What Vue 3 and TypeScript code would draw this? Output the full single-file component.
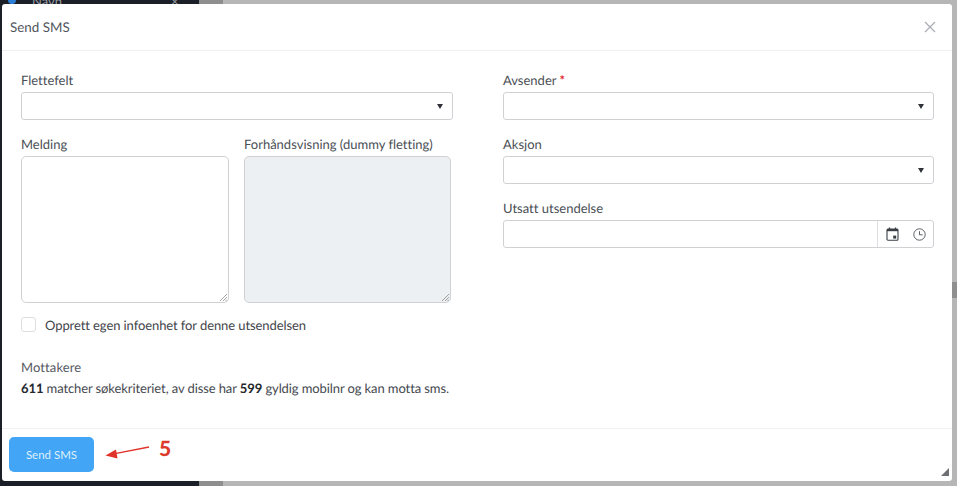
<script setup lang="ts">
const title: string = 'Send SMS'
</script>

<template>
  <div class="page">
    <div class="bg-dark"></div>
    <div class="bg-mid"></div>
    <div class="bg-thumb"></div>
    <div class="peek">
      <span class="dot"></span><span class="peek-name">Navn</span><span class="peek-x">×</span>
    </div>

    <section class="dialog">
      <header class="head">
        <h1 class="title">{{ title }}</h1>
        <svg class="close" width="12" height="12" viewBox="0 0 12 12">
          <path d="M1 1 L11 11 M11 1 L1 11" stroke="#a9adb3" stroke-width="1.2" fill="none" />
        </svg>
      </header>

      <div class="body">
        <div class="cols">
          <div class="col">
            <label class="lab">Flettefelt</label>
            <div class="select"><span class="caret"></span></div>
            <div class="pair">
              <div class="area-wrap">
                <label class="lab">Melding</label>
                <div class="area"><svg class="grip" width="8" height="8" viewBox="0 0 8 8"><path d="M1 8 L8 1 M4 8 L8 4 M6.5 8 L8 6.5" stroke="#8d8d8d" stroke-width="0.8" /></svg></div>
              </div>
              <div class="area-wrap">
                <label class="lab">Forhåndsvisning (dummy fletting)</label>
                <div class="area disabled"><svg class="grip" width="8" height="8" viewBox="0 0 8 8"><path d="M1 8 L8 1 M4 8 L8 4 M6.5 8 L8 6.5" stroke="#8d8d8d" stroke-width="0.8" /></svg></div>
              </div>
            </div>
          </div>
          <div class="col">
            <label class="lab">Avsender <span class="req">*</span></label>
            <div class="select"><span class="caret"></span></div>
            <label class="lab gap-lab">Aksjon</label>
            <div class="select"><span class="caret"></span></div>
            <label class="lab gap-lab">Utsatt utsendelse</label>
            <div class="dt">
              <div class="dt-input"></div>
              <div class="dt-icons">
                <svg width="13" height="14" viewBox="0 0 13 14">
                  <path d="M3.5 0.5 V3 M9.5 0.5 V3" stroke="#3a3f45" stroke-width="1.3" />
                  <rect x="1" y="2" width="11" height="11.2" rx="1" fill="none" stroke="#3a3f45" stroke-width="1.1" />
                  <rect x="1" y="2" width="11" height="2.2" fill="#3a3f45" />
                  <rect x="7.2" y="8.6" width="3" height="3" fill="#3a3f45" />
                </svg>
                <svg width="13" height="13" viewBox="0 0 13 13">
                  <circle cx="6.5" cy="6.5" r="5.7" fill="none" stroke="#4a4f55" stroke-width="0.9" />
                  <path d="M6.5 3.2 V6.8 H9.6" fill="none" stroke="#4a4f55" stroke-width="0.9" />
                </svg>
              </div>
            </div>
          </div>
        </div>

        <div class="check-row">
          <span class="box"></span>
          <span class="check-text">Opprett egen infoenhet for denne utsendelsen</span>
        </div>

        <div class="recv-title">Mottakere</div>
        <p class="recv"><b>611</b> matcher søkekriteriet, av disse har <b>599</b> gyldig mobilnr og kan motta sms.</p>
      </div>

      <footer class="foot">
        <button class="send" type="button">Send SMS</button>
      </footer>

      <svg class="resize" width="8" height="8" viewBox="0 0 8 8"><path d="M8 0 V8 H0 Z" fill="#6d6f72" /></svg>
    </section>

    <svg class="arrow" width="46" height="16" viewBox="0 0 46 16">
      <path d="M44 2 L10 8.6" stroke="#e0332a" stroke-width="1.4" fill="none" />
      <path d="M0.5 10.5 L11 4.5 L12.5 13.5 Z" fill="#e0332a" />
    </svg>
    <span class="five">5</span>
  </div>
</template>

<style>
html, body { margin: 0; background: #b7b7b7; }
</style>

<style scoped>
.page {
  position: relative;
  width: 960px;
  height: 486px;
  overflow: hidden;
  background: linear-gradient(to right, #b6b6b6 957px, #ffffff 957px);
  font-family: Lato, "Liberation Sans", sans-serif;
  color: #3b4046;
  text-rendering: geometricPrecision;
  font-variant-ligatures: none;
}
.bg-dark { position: absolute; left: 0; top: 0; bottom: 0; width: 199px; background: #1b1f27; }
.bg-mid { position: absolute; left: 199px; top: 0; bottom: 0; width: 24px; background: #8e8e8e; }
.bg-thumb { position: absolute; left: 952px; top: 282px; width: 5px; height: 16px; background: #8f8f8f; }
.peek { position: absolute; left: 0; top: -7px; width: 199px; height: 12px; font-size: 13px; color: #9a9ea5; }
.dot { position: absolute; left: 8px; top: 3px; width: 8px; height: 8px; border-radius: 50%; background: #2c7fd6; }
.peek-name { position: absolute; left: 32px; top: 0; }
.peek-x { position: absolute; left: 171px; top: 0; }

.dialog {
  position: absolute;
  left: 2px;
  top: 4px;
  width: 950px;
  height: 477px;
  background: #fff;
  border-radius: 3px;
  display: flex;
  flex-direction: column;
  box-sizing: border-box;
}
.head {
  height: 47px;
  flex: none;
  box-sizing: border-box;
  border-bottom: 1px solid #f0f1f2;
  padding: 0 16px 0 8px;
  display: flex;
  align-items: center;
  justify-content: space-between;
}
.title { margin: 0; font-size: 13.4px; font-weight: 400; color: #50555b; }
.body { flex: 1; padding: 21px 18px 0 19px; }
.cols { display: grid; grid-template-columns: 432px 431px; column-gap: 50px; }
.col { display: flex; flex-direction: column; align-items: stretch; }
.lab { display: block; font-size: 13px; line-height: 16px; height: 16px; margin-bottom: 4px; color: #4a4f55; }
.req { color: #e0252b; font-weight: 700; }
.gap-lab { margin-top: 16px; }
.select {
  position: relative;
  height: 28px;
  box-sizing: border-box;
  border: 1px solid #cfd1d4;
  border-radius: 3px;
  background: #fff;
}
.caret {
  position: absolute;
  right: 9px;
  top: 11px;
  width: 0;
  height: 0;
  border-left: 3.5px solid transparent;
  border-right: 3.5px solid transparent;
  border-top: 5px solid #2f3338;
}
.pair { display: grid; grid-template-columns: 208px 207px; column-gap: 15px; margin-top: 16px; }
.area {
  position: relative;
  height: 147px;
  box-sizing: border-box;
  border: 1px solid #cfd1d4;
  border-radius: 5px;
  background: #fff;
}
.area.disabled { background: #edf0f3; }
.grip { position: absolute; right: 1px; bottom: 1px; }
.dt {
  display: flex;
  height: 28px;
  box-sizing: border-box;
  border: 1px solid #cfd1d4;
  border-radius: 3px;
}
.dt-input { flex: 1; border-right: 1px solid #dcdee0; }
.dt-icons { width: 55px; display: flex; align-items: center; gap: 14px; padding-left: 8px; box-sizing: border-box; }
.check-row { display: flex; align-items: center; gap: 9px; margin-top: 13px; height: 16px; }
.box {
  width: 15px;
  height: 15px;
  box-sizing: border-box;
  border: 1px solid #dcdee0;
  border-radius: 3px;
}
.check-text { font-size: 13px; letter-spacing: -0.09px; color: #3f444a; position: relative; top: 1px; }
.recv-title { margin-top: 27px; font-size: 13px; line-height: 16px; letter-spacing: 0.1px; color: #55595f; }
.recv { margin: 5px 0 0; font-size: 13px; line-height: 16px; letter-spacing: -0.1px; color: #45494f; }
.recv b { font-weight: 700; color: #24282d; }
.foot {
  height: 53px;
  flex: none;
  box-sizing: border-box;
  border-top: 1px solid #f0f1f2;
  padding: 8px 7px;
}
.send {
  width: 85px;
  height: 35px;
  border: none;
  border-radius: 5px;
  background: #42a5f5;
  color: #dff0fd;
  font-family: inherit;
  font-size: 11.5px;
  padding: 0;
}
.resize { position: absolute; right: 3px; bottom: 5px; }
.arrow { position: absolute; left: 105px; top: 445px; }
.five {
  position: absolute;
  left: 159px;
  top: 437px;
  font-size: 21px;
  line-height: 24px;
  font-weight: 900;
  color: #dc3a2c;
}
</style>
